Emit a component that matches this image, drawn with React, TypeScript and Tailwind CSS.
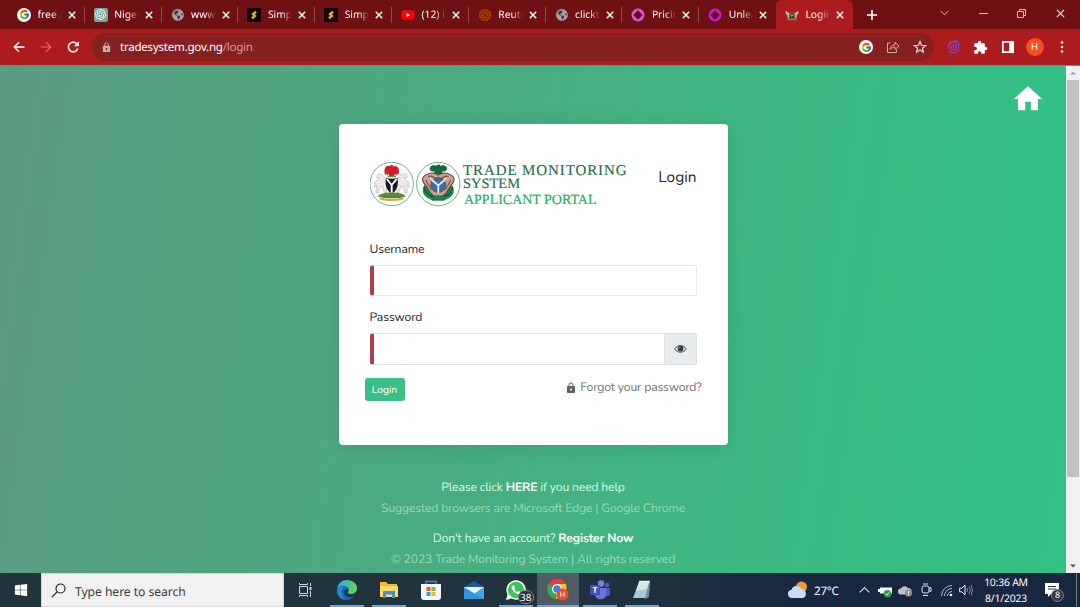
import React from 'react';
import { FcGoogle } from 'react-icons/fc';
import { FaGlobeAmericas, FaWhatsapp, FaWindows, FaYoutube } from 'react-icons/fa';
import { MdHome, MdLock, MdExtension } from 'react-icons/md';
import { SiOpenai } from 'react-icons/si';

const GoogleIcon = () => (
  <span className="flex h-[14px] w-[14px] items-center justify-center rounded-full bg-white">
    <FcGoogle size={11} />
  </span>
);

const GlobeIcon = () => (
  <span className="flex h-[13px] w-[13px] items-center justify-center rounded-full bg-[#5a3032]">
    <FaGlobeAmericas size={12} color="#a9a0a0" />
  </span>
);

const SimpleIcon = () => (
  <svg width="14" height="14" viewBox="0 0 14 14">
    <rect width="14" height="14" fill="#0d0706" />
    <path d="M8.300 2.800 4.300 5.900l1.400 1.300h3L8.100 6l1.800-1.400z" fill="#f3a32b" />
    <path d="M5.700 11.200l4-3.100-1.400-1.300h-3L5.900 8 4.100 9.400z" fill="#f3a32b" />
  </svg>
);

const RingIcon = ({ color }: { color: string }) => (
  <svg width="14" height="14" viewBox="0 0 14 14">
    <circle cx="7" cy="7" r="6.500" fill={color} />
    <path d="M7 2.300 11.700 7 7 11.700 2.300 7z" fill="#5c0b1c" />
  </svg>
);

const ReutersIcon = () => (
  <svg width="14" height="14" viewBox="0 0 14 14">
    <circle cx="7" cy="7" r="6.300" fill="#862407" />
    <circle cx="7" cy="7" r="5.300" fill="none" stroke="#b34610" strokeWidth="1.600" strokeDasharray="1.600 1" />
    <circle cx="7" cy="7" r="2.800" fill="none" stroke="#b34610" strokeWidth="1.400" strokeDasharray="1.400 1" />
  </svg>
);

const CrestIcon = () => (
  <svg width="14" height="14" viewBox="0 0 14 14">
    <path d="M.5 2.500l2 1.500 2 1v5H2.500V7.500L.8 6zM13.500 2.500l-2 1.500-2 1v5h2V7.500L13.200 6z" fill="#cdb6a4" />
    <path d="M4.500 3.500 7 5 9.500 3.500 9.300 6H4.700z" fill="#a8342e" />
    <path d="M4.500 6h5v3.500L7 11 4.500 9.500z" fill="#2b4230" />
    <path d="M2 10.500h10v1.700H2z" fill="#679546" />
    <path d="M5.300 6.500 7 8.200l1.700-1.700" stroke="#eee" strokeWidth=".8" fill="none" />
  </svg>
);

const tabs: { label: string; icon: React.ReactNode }[] = [
  { label: 'free a', icon: <GoogleIcon /> },
  {
    label: 'Niger',
    icon: (
      <span className="flex h-[14px] w-[14px] items-center justify-center rounded-[2px] bg-[#75a798]">
        <SiOpenai size={11} color="#ffffff" />
      </span>
    ),
  },
  { label: 'www.', icon: <GlobeIcon /> },
  { label: 'Simpl', icon: <SimpleIcon /> },
  { label: 'Simpl', icon: <SimpleIcon /> },
  { label: '(12) H', icon: <FaYoutube size={14} color="#fe0000" className="bg-[radial-gradient(white_3px,transparent_3px)]" /> },
  { label: 'Reute', icon: <ReutersIcon /> },
  { label: 'clickt', icon: <GlobeIcon /> },
  { label: 'Pricin', icon: <RingIcon color="#dc58cf" /> },
  { label: 'Unlea', icon: <RingIcon color="#d016d8" /> },
  { label: 'Login', icon: <CrestIcon /> },
];

const Cross = ({ size = 8, w = 1.5 }: { size?: number; w?: number }) => (
  <svg width={size} height={size} viewBox="0 0 8 8">
    <path d="M.8.8l6.400 6.400M7.200.8.8 7.200" stroke="#fff" strokeWidth={w} />
  </svg>
);

const TabStrip = () => (
  <div className="flex h-[29px] bg-[#6f1012] pl-[8px] text-white">
    {tabs.map((t, i) => {
      const active = i === 10;
      return (
        <div
          key={i}
          className={`flex w-[76.8px] shrink-0 items-center pl-[9px] ${active ? 'rounded-t-[6px] bg-[#ac1c1e]' : ''}`}
        >
          <span className="flex w-[14px] shrink-0 justify-center">{t.icon}</span>
          <span className="ml-[6.500px] w-[24.500px] shrink-0 overflow-hidden whitespace-nowrap text-[10.3px] leading-[16px] [mask-image:linear-gradient(to_right,black_55%,transparent)]">
            {t.label}
          </span>
          <span className="ml-[6px] flex w-[8px] shrink-0">
            <Cross />
          </span>
          {i < 9 && <span className="ml-auto h-[16px] w-px bg-[#96474a]" />}
        </div>
      );
    })}
    <div className="flex w-[38px] items-center justify-center">
      <svg width="10" height="10" viewBox="0 0 10 10">
        <path d="M5 0v10M0 5h10" stroke="#fff" strokeWidth="1.600" />
      </svg>
    </div>
    <div className="ml-[49px] flex h-[26px] flex-1 items-center gap-[29.8px]">
      <svg width="9" height="6" viewBox="0 0 9 6">
        <path d="M.5.8l4 4 4-4" stroke="#e9b5b6" fill="none" />
      </svg>
      <svg width="9" height="9" viewBox="0 0 9 9">
        <path d="M0 4.500h9" stroke="#f0c9ca" />
      </svg>
      <svg width="9" height="9" viewBox="0 0 9 9">
        <path d="M.5 2.500h6v6h-6zM2.500 2V.5h6v6H7" stroke="#f0c9ca" strokeWidth=".9" fill="none" />
      </svg>
      <Cross size={9} w={0.9} />
    </div>
  </div>
);

const Toolbar = () => (
  <div className="flex h-[37px] items-center border-b border-[#a4746b] bg-[#ac1c1e]">
    <div className="flex w-[92px] items-center gap-[15px] pl-[13px]">
      <svg width="12" height="12" viewBox="0 0 12 12">
        <path d="M11.500 6H1.400M6 1.200 1.200 6 6 10.800" stroke="#fff" strokeWidth="1.400" fill="none" />
      </svg>
      <svg width="12" height="12" viewBox="0 0 12 12">
        <path d="M.5 6h10.100M6 1.200 10.800 6 6 10.800" stroke="#d56d6e" strokeWidth="1.200" fill="none" />
      </svg>
      <svg width="13" height="12" viewBox="0 0 13 12">
        <path d="M10.800 7.500A4.800 4.800 0 1 1 9.500 2.500L11 4" stroke="#fff" strokeWidth="1.500" fill="none" />
        <path d="M11.800.3v4.900H7z" fill="#fff" />
      </svg>
    </div>
    <div className="flex h-[28px] w-[842px] items-center rounded-full bg-[#861f20] pl-[9px]">
      <MdLock size={11} color="#c0b1b1" />
      <span className="ml-[8px] pt-px text-[11.6px] tracking-[-0.26px] text-white">
        tradesystem.gov.ng<span className="text-[#d69a9b]">/login</span>
      </span>
      <div className="ml-auto flex items-center gap-[13px] pr-[7px]">
        <GoogleIcon />
        <svg width="14" height="14" viewBox="0 0 14 14">
          <path d="M4.500 3H1.500v9.500h9V9.500M4 9.500c.3-3 2-4.600 5-4.800V2.200L13 6 9 9.400V7.100C6.700 7.100 5.200 7.800 4 9.500z" stroke="#e0b7b8" fill="none" strokeWidth=".9" />
        </svg>
        <svg width="14" height="14" viewBox="0 0 24 24">
          <path d="M12 2.500l2.600 6.600 7 .5-5.400 4.500 1.700 6.900L12 17.200 6.100 21l1.700-6.900L2.400 9.600l7-.5z" stroke="#f2dada" strokeWidth="2" fill="none" />
        </svg>
      </div>
    </div>
    <div className="flex flex-1 items-center pl-[13px]">
      <svg width="13" height="14" viewBox="0 0 13 14">
        <path d="M4 10.500C1 9 .8 3 4.500 2c3.500-1 5 1 4.800 4-.1 3-1.500 4-3.300 3.800-1.800-.3-1.700-2.300-1.400-3.600.5-1.700 2.400-1.600 2.400 0 0 .8-.4 1.300-.9 1.300M7 1c4-.5 5.300 2 4.800 6-.4 3.500-2 5.500-5.300 5.700-2 .1-3-.4-3.800-1.200" stroke="#7b48c8" strokeWidth="1.300" fill="none" />
      </svg>
      <MdExtension size={15} color="#fff" className="ml-[13px]" />
      <svg width="12" height="12" viewBox="0 0 12 12" className="ml-[13.5px]">
        <path d="M0 0h12v12H0zM1.700 1.700v8.600h5.500V1.700z" fill="#fff" fillRule="evenodd" />
      </svg>
      <span className="ml-[12px] flex h-[18px] w-[18px] items-center justify-center rounded-full bg-[#f4511e] text-[9.5px] text-white">H</span>
      <svg width="4" height="12" viewBox="0 0 4 12" className="ml-[16px]">
        <circle cx="2" cy="1.500" r="1.200" fill="#fff" />
        <circle cx="2" cy="6" r="1.200" fill="#fff" />
        <circle cx="2" cy="10.500" r="1.200" fill="#fff" />
      </svg>
    </div>
  </div>
);

const Logo = () => (
  <svg width="260" height="48" viewBox="0 0 260 48">
    <g>
      <circle cx="21.700" cy="24" r="21.700" fill="#fff" stroke="#5dab75" strokeWidth=".9" />
      <g fill="#ece9e9" stroke="#b3acaf" strokeWidth=".6">
        <path d="M16 20c-1-3-3-5-5-6-2-.5-3 0-4 1.500-1.500 1-1 2.500.5 2.500l2-.5c-1 2-4 3-5 6 0 2-1 3 0 4 1-1 1-2 2-2.500 1 3-1 4 0 8h2l1-5 3-2 2 7h2V22z" />
        <path d="M27.400 20c1-3 3-5 5-6 2-.5 3 0 4 1.500 1.500 1 1 2.500-.5 2.500l-2-.5c1 2 4 3 5 6 0 2 1 3 0 4-1-1-1-2-2-2.500-1 3 1 4 0 8h-2l-1-5-3-2-2 7h-2V22z" />
      </g>
      <path d="M21 5c1.500-.8 2.500 0 2.300 1.500 1.500-1.200 4-.5 5 1.500.9 2 .8 4.500 0 7l-1.300-1.500-.6 2.200-1.400-2-.8 2.300h-5l-.8-2.300-1.400 2-.6-2.200L15.100 15c-.8-2.500-.9-5 0-7 1-2 3-2.700 4.500-1.700z" fill="#cf1d2a" />
      <path d="M17.500 16.500h8.400" stroke="#4c9a57" strokeWidth="1.400" />
      <path d="M16 18c3.500 1 8 1 11.500 0 1.200 7-.5 12.500-5.700 16-5.300-3.500-7-9-5.800-16z" fill="#17181b" />
      <path d="M16.800 19l4.900 6 5-6M21.700 24.500v9" stroke="#fff" strokeWidth="1.900" fill="none" />
      <path d="M8 36c3-3 9-3.500 13.700-3.500S32.500 33 35.500 36c-1 3-26 3-27.500 0z" fill="#3f8f3e" />
      <path d="M11 35.500h3m2.500-1h3m4 0h3m3 1h3" stroke="#cf5a2e" strokeWidth="1.300" />
      <path d="M10 37.500c8 1.800 15.500 1.800 23.500 0v2c-8 2-15.500 2-23.500 0z" fill="#e2a437" />
    </g>
    <g>
      <circle cx="68.300" cy="24" r="21.700" fill="#fff" stroke="#5dab75" strokeWidth=".9" />
      <path d="M54.500 25c-3 5-2 10 3 13l4 2h13.600l4-2c5-3 6-8 3-13l-7 6H62z" fill="#1a8a4c" />
      <path d="M54 27c0 4 4 8 9 10M82.600 27c0 4-4 8-9 10M57 28l6 8M79.600 28l-6 8" stroke="#0a5730" strokeWidth="1.300" fill="none" />
      <path d="M58 14c4-2 7-1 10.300 1 3.500-2 6.500-3 10.500-1 4 1 6 4 5 7-1 3-3 4-4 6-2 4-4 7-7 9h-9c-3-2-5-5-7-9-1-2-3-3-4-6-1-3 1-6 5.200-7z" fill="#cfa392" stroke="#5b4546" strokeWidth="1.100" />
      <path d="M58 16.500c3.500-1 6 .5 7.500 3M78.600 16.500c-3.500-1-6 .5-7.500 3M56 20c1 4 4 6 5 10M80.600 20c-1 4-4 6-5 10" stroke="#7b5149" strokeWidth="1.100" fill="none" />
      <circle cx="68.300" cy="25" r="7.500" fill="#416c9f" stroke="#43494f" strokeWidth=".8" />
      <path d="M62.500 20.500l5.800 5 5.800-5M68.300 25v8" stroke="#eef3f7" strokeWidth="1.700" fill="none" />
      <path d="M60 18.500c1.500 0 3 1.200 3 2.700M76.600 18.500c-1.500 0-3 1.200-3 2.700" stroke="#f3dccf" strokeWidth="1.700" fill="none" />
      <path d="M67 5c1.500-1 3-.5 3.200.8 1.800-1 5-.8 6.300 1.200 1 1.500.3 3-1 4-1.200.7-2.500.7-3.700.3l1.500 2.700H63.300l1.500-2.700c-1.200.4-2.500.4-3.700-.3-1.300-1-2-2.500-1-4 1.300-2 4.500-2.200 6.300-1.200z" fill="#12693a" />
      <path d="M62 38.500h12.600v2.200H62z" fill="#147944" />
    </g>
    <g fontFamily="'Liberation Serif', serif" textRendering="geometricPrecision">
      <text x="93" y="15" fontSize="15" fill="#286b4d" stroke="#286b4d" strokeWidth=".15" textLength="163.500" lengthAdjust="spacing">TRADE MONITORING</text>
      <text x="93" y="28.300" fontSize="14.300" fill="#286b4d" stroke="#286b4d" strokeWidth=".15" textLength="57" lengthAdjust="spacingAndGlyphs">SYSTEM</text>
      <text x="94" y="43.800" fontSize="14" fill="#22ac5a" stroke="#22ac5a" strokeWidth=".15" textLength="132.500" lengthAdjust="spacing">APPLICANT PORTAL</text>
    </g>
  </svg>
);

const LoginCard = () => (
  <div className="h-[321px] w-[389px] rounded-[4px] bg-white px-[31px] pt-[36px] text-[#212831] shadow-[0_3px_20px_rgba(0,0,0,0.09)]">
    <div className="flex h-[78px] items-start justify-between">
      <Logo />
      <h1 className="mt-[6px] text-[15.4px] leading-[24px]">Login</h1>
    </div>
    <label className="block h-[27px] pt-[2px] text-[12.2px] leading-[21px] tracking-[-0.12px]">Username</label>
    <div className="h-[31px] w-[327px] rounded-[3px] border border-l-4 border-[#e6e8eb] border-l-[#ad404a] bg-white" />
    <label className="mt-[11px] block h-[26px] pt-px text-[12.2px] leading-[21px] tracking-[-0.12px]">Password</label>
    <div className="flex h-[32px] w-[327px]">
      <div className="flex-1 rounded-l-[3px] border border-l-4 border-[#e0e2e5] border-l-[#ad404a]" />
      <div className="flex w-[32px] items-center justify-center rounded-r-[2px] border border-l-0 border-[#dde0e4] bg-[#e9ecef]">
        <svg width="13" height="10" viewBox="0 0 13 10">
          <path d="M.7 5C3.500.5 9.500.5 12.300 5 9.500 9.300 3.500 9.300.7 5z" fill="none" stroke="#434950" strokeWidth="1" />
          <circle cx="6.500" cy="4.500" r="2.900" fill="#30363d" />
          <path d="M5 4.500A1.500 1.500 0 0 1 6.500 3" stroke="#ccc" strokeWidth=".7" fill="none" />
        </svg>
      </div>
    </div>
    <div className="-mx-[5px] mt-[12px] flex items-start justify-between">
      <button className="mt-px h-[23px] w-[40px] rounded-[3px] bg-[#38c087] text-[10.4px] tracking-[-0.1px] text-white">Login</button>
      <div className="flex items-center text-[12.2px] leading-[20px] tracking-[-0.18px] text-[#70757a]">
        <MdLock size={12} className="mr-[3px] text-[#5f6266]" />
        <span className="pt-px">Forgot your password?</span>
      </div>
    </div>
  </div>
);

const Page = () => (
  <div className="flex h-[507px]">
    <main className="relative flex flex-1 flex-col items-center bg-[linear-gradient(98deg,#5b9b80_0%,#4da880_35%,#3fb681_65%,#32c185_100%)] pt-[58px] font-['Nunito','Lato',sans-serif]">
      <MdHome size={34} color="#fff" className="absolute top-[16px] right-[21px]" />
      <LoginCard />
      <div className="mt-[33px] flex flex-col items-center text-[12.2px] leading-[20.5px] tracking-[-0.17px] whitespace-nowrap text-[#d0ffe3]">
        <p>Please click <b className="text-white">HERE</b> if you need help</p>
        <p className="text-[#96d9b6]">Suggested browsers are Microsoft Edge | Google Chrome</p>
        <p className="mt-[10px]">Don't have an account? <b className="text-white">Register Now</b></p>
        <p className="text-[#96d9b6]">© 2023 Trade Monitoring System | All rights reserved</p>
      </div>
    </main>
    <div className="flex w-[14px] flex-col items-center bg-[#f1f1f1]">
      <div className="flex h-[14px] items-center">
        <svg width="6" height="4" viewBox="0 0 6 4"><path d="M0 3.500 3 .5l3 3z" fill="#a3a3a3" /></svg>
      </div>
      <div className="h-[397px] w-[12px] bg-[#c1c1c1]" />
      <div className="mt-auto flex h-[14px] items-center">
        <svg width="6" height="4" viewBox="0 0 6 4"><path d="M0 .5 3 3.500l3-3z" fill="#505050" /></svg>
      </div>
    </div>
  </div>
);

const EdgeLogo = () => (
  <svg width="22" height="22" viewBox="0 0 22 22">
    <defs>
      <linearGradient id="eg" x1="0" x2="1"><stop stopColor="#2aa8e0" /><stop offset="1" stopColor="#63d95b" /></linearGradient>
      <linearGradient id="eb" x1="0" x2="1"><stop stopColor="#1472cf" /><stop offset="1" stopColor="#1453a8" /></linearGradient>
    </defs>
    <path d="M1 10C2 4 6 1 11 1c6 0 10 4 10 8 0 4-3 6-6 6-2.500 0-3.500-1-3-2 1.500-2 .5-5-2.500-5C6 7.500 2.500 8 1 10z" fill="url(#eg)" />
    <path d="M1 11c1-4 5-5 8-4 2 .7 3 2 3 3.500-2-1-4 .5-4 3 0 4 6 6 11 3-3 4-7 5-10 4.500C4 20 1 16 1 11z" fill="url(#eb)" />
    <path d="M8 8c-3 2-4 7 1 12C4 20 1 16 1 11c1-3 4-4 7-3z" fill="#238bd9" />
  </svg>
);

const ExplorerLogo = () => (
  <svg width="20" height="18" viewBox="0 0 20 18">
    <path d="M1 1h6l2 2h9v13H1z" fill="#f5b92e" />
    <path d="M1 5h18v11H1z" fill="#ffda69" />
    <path d="M4 10h12v7h-3v-3.500H7V17H4z" fill="#4290cf" />
  </svg>
);

const StoreLogo = () => (
  <svg width="20" height="20" viewBox="0 0 20 20">
    <path d="M5 5V1.500h10V5" fill="none" stroke="#2f9fd2" strokeWidth="1.300" />
    <path d="M0 4h20v13a3 3 0 0 1-3 3H3a3 3 0 0 1-3-3z" fill="#f3f6f8" />
    <path d="M5.500 7h4v4h-4z" fill="#ee5a2c" /><path d="M10.500 7h4v4h-4z" fill="#80b63b" />
    <path d="M5.500 12h4v4h-4z" fill="#2b9de0" /><path d="M10.500 12h4v4h-4z" fill="#f4b52a" />
  </svg>
);

const MailLogo = () => (
  <svg width="20" height="20" viewBox="0 0 20 20">
    <path d="M0 7 10 1l10 6v12H0z" fill="#175ba9" />
    <path d="M0 7h20v12H0z" fill="#3da8e8" />
    <path d="M0 7.500 20 19H0z" fill="#2f97de" />
    <path d="M0 7h20l-9.500 6.500z" fill="#f0f5f9" />
  </svg>
);

const WhatsLogo = () => (
  <span className="relative flex">
    <svg width="20" height="20" viewBox="0 0 20 20">
      <path d="M0 20l1.500-5.500A9.700 9.700 0 1 1 5.500 18.500z" fill="#fff" />
      <circle cx="10" cy="10" r="8.200" fill="#3bc45a" />
      <path d="M6.500 5.500c-1.500 1-1 3.500 1 5.800s4.500 3.700 6.300 2.500c1-.7.900-1.600.5-1.900l-1.800-.9-1.200 1.100c-1.200-.4-2.300-1.500-3-2.700l.9-1.100-.8-2.100c-.5-.8-1.200-.9-1.900-.7z" fill="#fff" />
    </svg>
    <span className="absolute top-[10px] left-[12px] flex h-[14px] w-[16px] items-center justify-center rounded-full border border-[#7c878c] bg-[#253238] text-[10px] text-white">38</span>
  </span>
);

const ChromeLogo = () => (
  <svg width="22" height="22" viewBox="0 0 22 22">
    <path d="M10 10 1.500 5A10 10 0 0 1 19 5z" fill="#e43d30" />
    <path d="M10 10 1.500 5A10 10 0 0 0 9 20l4-7z" fill="#3aa757" />
    <path d="M10 10 11 5h8c2 6-2 14-10 15z" fill="#fbc116" />
    <circle cx="10" cy="10" r="5" fill="#fff" /><circle cx="10" cy="10" r="3.800" fill="#3f7ee8" />
    <circle cx="15.500" cy="15.500" r="6" fill="#ee4b2b" />
    <text x="15.500" y="18.300" textAnchor="middle" fontSize="7.500" fill="#fff" fontFamily="Noto Sans, sans-serif">H</text>
  </svg>
);

const TeamsLogo = () => (
  <svg width="22" height="20" viewBox="0 0 22 20">
    <circle cx="18" cy="5" r="2.300" fill="#5059c9" /><circle cx="12" cy="3.500" r="3.200" fill="#7b83eb" />
    <path d="M14 8h7v5c0 4-4 4-6 2z" fill="#5059c9" />
    <path d="M6 8h11v7c0 5-10 6-11 0z" fill="#6a72dc" />
    <rect x="1" y="5" width="10" height="10" rx="1" fill="#464eb8" />
    <text x="6" y="13" textAnchor="middle" fontSize="8.500" fontWeight="700" fill="#fff" fontFamily="Noto Sans, sans-serif">T</text>
  </svg>
);

const NotepadLogo = () => (
  <svg width="20" height="20" viewBox="0 0 20 20">
    <path d="M7 2h11l-1 15-4 2z" fill="#6c9499" />
    <path d="M7 2h10l-4 16H1z" fill="#a5ccd2" />
    <path d="M7 2h10l-2 7L4 11z" fill="#d3e7e8" /><path d="M7 1.500h11" stroke="#eee" strokeWidth="1.500" />
  </svg>
);

const apps: { icon: React.ReactNode; open?: boolean; active?: boolean }[] = [
  { icon: <EdgeLogo />, open: true },
  { icon: <ExplorerLogo />, open: true },
  { icon: <StoreLogo /> },
  { icon: <MailLogo /> },
  { icon: <WhatsLogo />, open: true },
  { icon: <ChromeLogo />, open: true, active: true },
  { icon: <TeamsLogo />, open: true },
  { icon: <NotepadLogo />, open: true },
];

const Taskbar = () => (
  <div className="flex h-[34px] bg-[linear-gradient(to_right,#22353d,#20323e_55%,#182740_78%,#18263f)] text-white">
    <div className="flex w-[41px] items-center justify-center"><FaWindows size={14} /></div>
    <div className="flex w-[243px] items-center border border-[#d4d6d7] bg-[#f1f1f1] pl-[9px]">
      <svg width="15" height="15" viewBox="0 0 15 15">
        <circle cx="9.500" cy="5.500" r="4.500" fill="none" stroke="#222" strokeWidth="1.200" /><path d="M6.300 8.700.8 14.200" stroke="#222" strokeWidth="1.200" />
      </svg>
      <span className="ml-[9px] pt-[4px] text-[12.2px] tracking-[-0.08px] text-[#3d3d3d]">Type here to search</span>
    </div>
    <div className="flex w-[42px] items-center justify-center">
      <svg width="15" height="14" viewBox="0 0 15 14">
        <path d="M1.500 3.500h8v7h-8zM1.500 0v1.500h8V0M1.500 14v-1.500h8V14M12.500 0v3M12.500 8v6" fill="none" stroke="#d1d8db" strokeWidth="1" />
        <path d="M11.500 4h2v3h-2z" fill="#d1d8db" />
      </svg>
    </div>
    {apps.map((a, i) => (
      <div key={i} className={`flex w-[42.2px] shrink-0 flex-col items-center ${a.active ? 'bg-[#4d5c65]' : ''}`}>
        <div className="flex h-[32px] items-center pt-[2px]">{a.icon}</div>
        {a.open && <div className={`h-[2px] ${a.active ? 'w-full' : 'w-[34px]'} bg-[#6ba5dc]`} />}
      </div>
    ))}
    <div className="ml-auto flex w-[293px] items-center">
      <svg width="21" height="18" viewBox="0 0 21 18">
        <circle cx="14.500" cy="6" r="5.500" fill="#f39a32" />
        <path d="M4.500 17a4.200 4.200 0 0 1 0-8.300A5.500 5.500 0 0 1 14.500 8 4.700 4.700 0 0 1 16 17z" fill="#c9dcf4" />
      </svg>
      <span className="ml-[6px] w-[27px] pt-[3px] text-[11.7px] tracking-[-0.3px] whitespace-nowrap">27°C</span>
      <svg width="11" height="6" viewBox="0 0 11 6" className="ml-[18px]"><path d="M.7 5.300l4.800-4.600 4.800 4.600" fill="none" stroke="#e5e7eb" strokeWidth="1.100" /></svg>
      <svg width="15" height="13" viewBox="0 0 15 13" className="mt-[2px] ml-[8px]">
        <path d="M2 2.500h12v6H2zM0 4h2v3H0z" fill="#f3f5f6" /><circle cx="9.500" cy="8.800" r="3.700" fill="#28a443" /><path d="M7.800 8.800l1.200 1.200 2.200-2.500" fill="none" stroke="#fff" />
      </svg>
      <svg width="15" height="12" viewBox="0 0 15 12" className="mt-[2px] ml-[5px]">
        <path d="M3 9.500a3 3 0 0 1 0-6A4 4 0 0 1 10 3a3.300 3.300 0 0 1 1 6.500z" fill="#bfc2c9" /><circle cx="10.500" cy="8" r="3.600" fill="#918b8b" /><path d="M10.500 6v3M10.500 9.700v1" stroke="#fff" />
      </svg>
      <svg width="13" height="14" viewBox="0 0 13 14" className="ml-[7px]">
        <rect x="2" y="3" width="7" height="7" rx="2" fill="none" stroke="#e4e7ec" /><path d="M9 5.500l2-1v4l-2-1M3 1h5M3 12.500h5" stroke="#e4e7ec" fill="none" />
      </svg>
      <svg width="13" height="13" viewBox="0 0 13 13" className="ml-[7px]">
        <path d="M1.500 12A10.500 10.500 0 0 1 12 1.500M4.500 12A7.500 7.500 0 0 1 12 4.500M7.500 12A4.500 4.500 0 0 1 12 7.500" fill="none" stroke="#aeb6c1" /><circle cx="11" cy="11" r="1.300" fill="#fff" />
      </svg>
      <svg width="14" height="12" viewBox="0 0 14 12" className="ml-[6px]">
        <path d="M.6 4.200h2.200L6 1v10L2.800 7.800H.6z" fill="none" stroke="#e9ebee" /><path d="M8 4.200q1.400 1.800 0 3.600M10 2.500q2.800 3.500 0 7M12 1q3 5 0 10" fill="none" stroke="#8e98a7" strokeWidth=".9" />
      </svg>
      <div className="ml-[7px] w-[52px] pt-[3px] text-center text-[10.4px] leading-[15.5px] tracking-[-0.2px] whitespace-nowrap">
        <div>10:36 AM</div><div>8/1/2023</div>
      </div>
      <span className="relative ml-[13px] flex">
        <svg width="14" height="15" viewBox="0 0 14 15"><path d="M0 0h14v11H6l-3 3v-3H0z" fill="#fff" /><path d="M3 3.500h8M3 6h8" stroke="#24304a" /></svg>
        <span className="absolute top-[6px] left-[6px] flex h-[13px] w-[13px] items-center justify-center rounded-full border border-[#7b7f86] bg-[#35383d] text-[9px]">8</span>
      </span>
      <span className="ml-auto mr-[3px] h-full w-px bg-[#76808f]" />
    </div>
  </div>
);

export default function App() {
  return (
    <div className="flex h-[607px] w-[1080px] flex-col overflow-hidden font-['Noto_Sans',sans-serif] [text-rendering:geometricPrecision]">
      <TabStrip />
      <Toolbar />
      <Page />
      <Taskbar />
    </div>
  );
}
